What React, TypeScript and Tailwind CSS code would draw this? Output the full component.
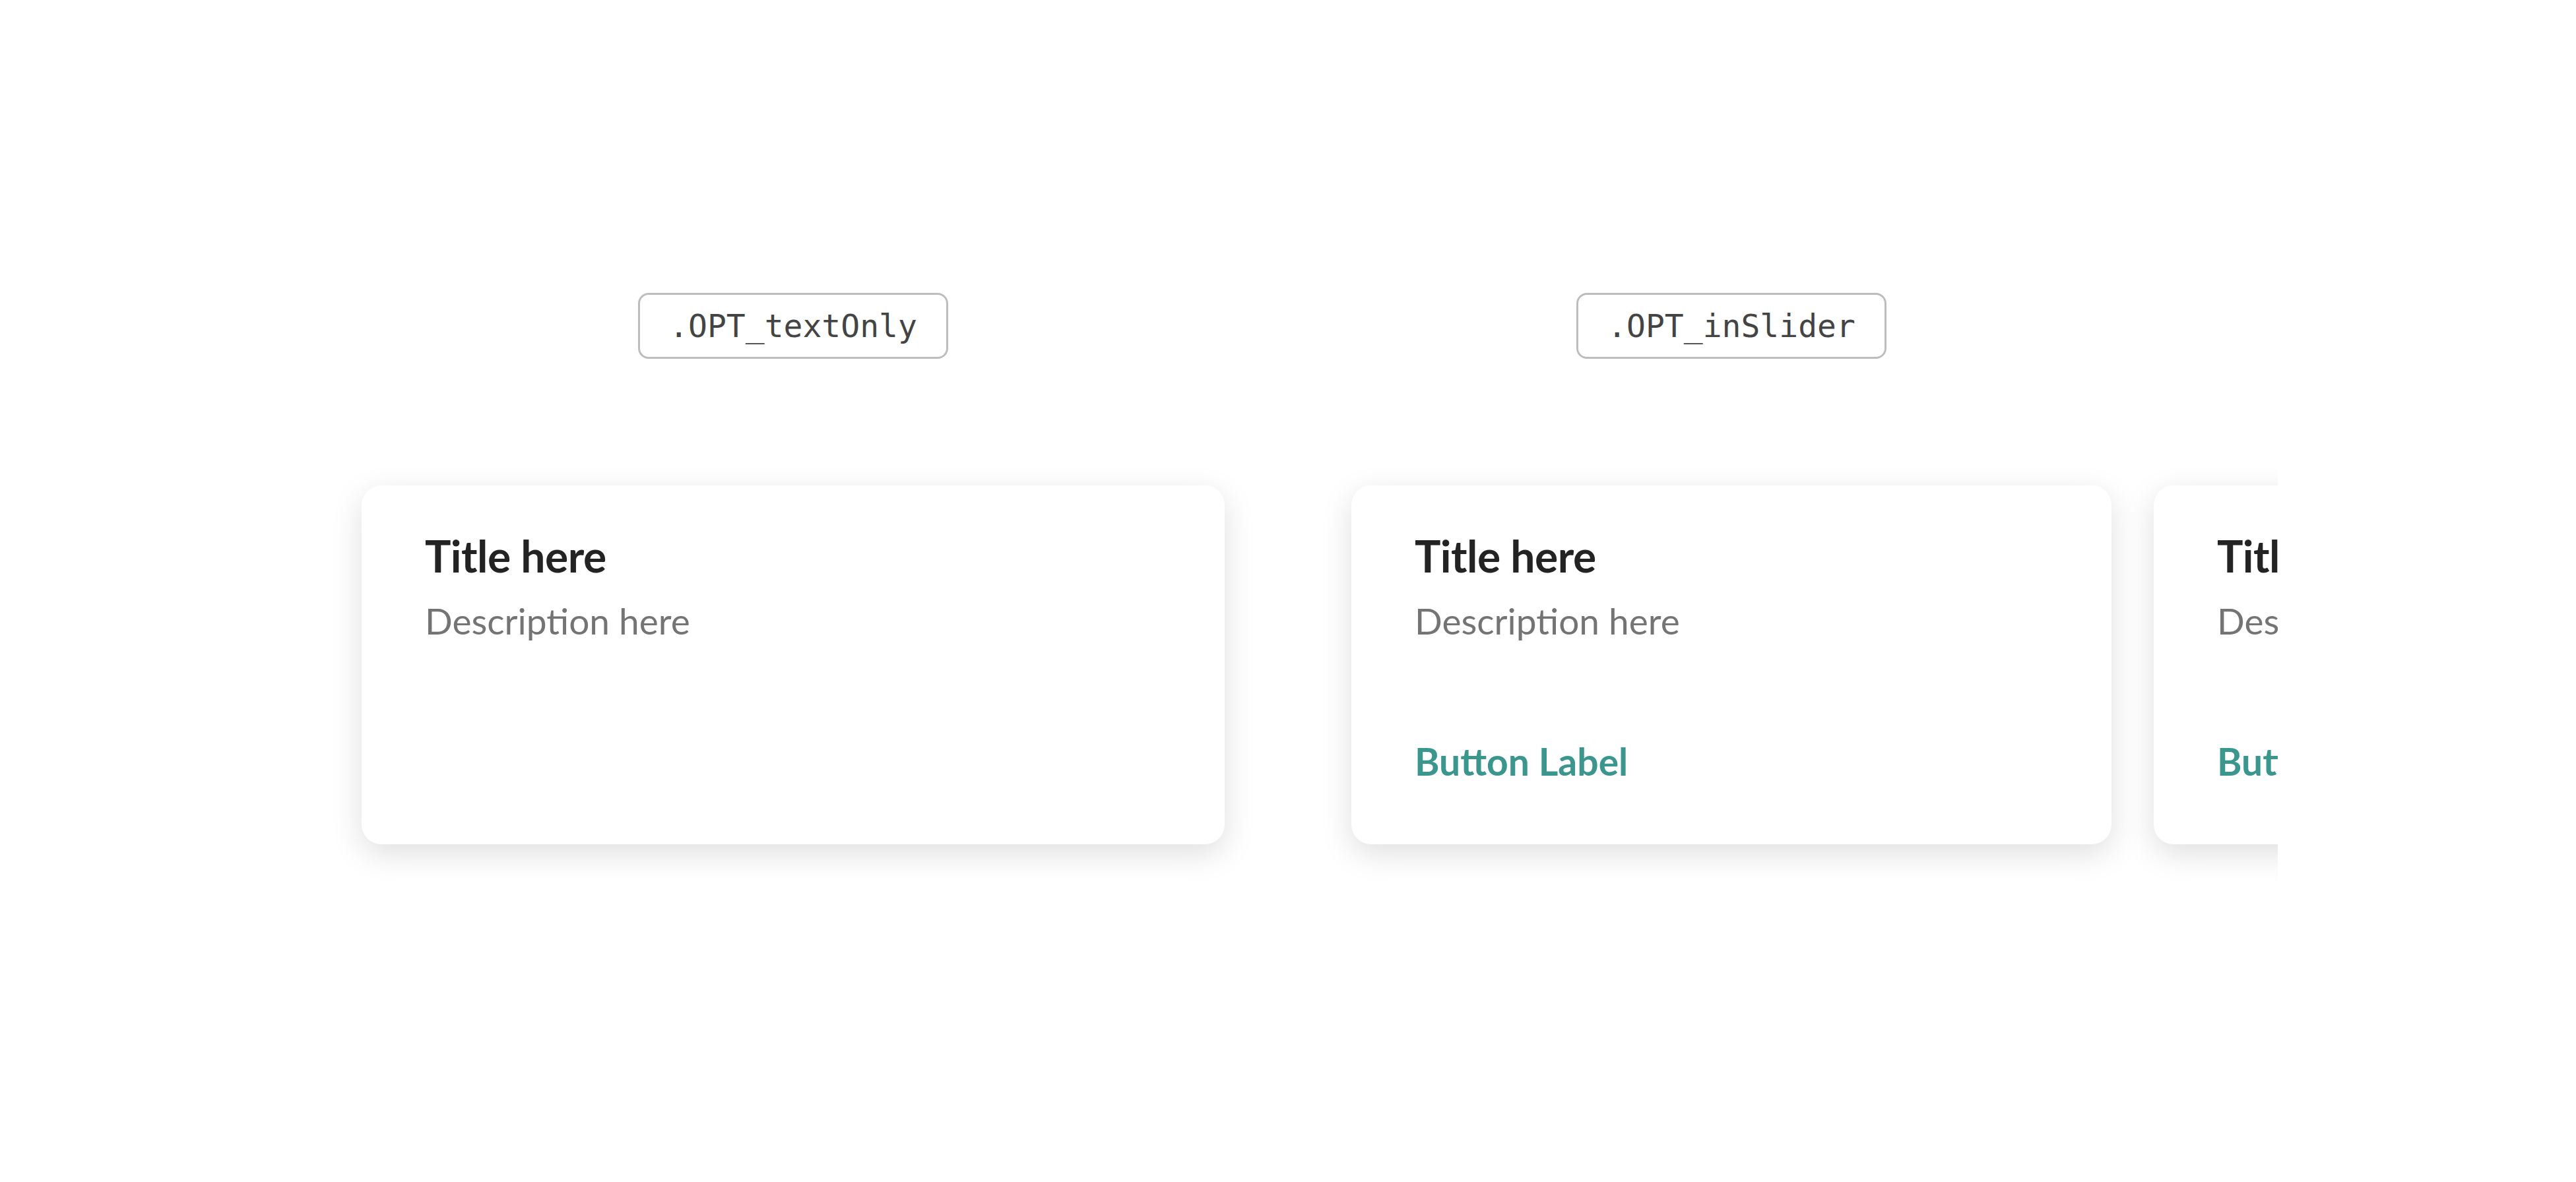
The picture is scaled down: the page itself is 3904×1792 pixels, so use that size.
// Option previews: a mono class-name tag above each card variant.
// .OPT_textOnly shows a lone card; .OPT_inSlider shows a card with a
// button label, followed by the next slide peeking in from the right.

type Variant = {
  tag: string;
  withButton: boolean;
};

const TEXT_ONLY: Variant = { tag: ".OPT_textOnly", withButton: false };
const IN_SLIDER: Variant = { tag: ".OPT_inSlider", withButton: true };

function Tag({ label }: { label: string }) {
  return (
    <div className="flex h-[100px] items-center rounded-[16px] border-[3px] border-[#bdbdbd] px-[44px] font-['DejaVu_Sans_Mono','Liberation_Mono',monospace] text-[48px] text-[#444444]">
      {label}
    </div>
  );
}

function Card({ variant, className = "" }: { variant: Variant; className?: string }) {
  return (
    <div
      className={`flex h-[544px] shrink-0 flex-col rounded-[30px] bg-white px-[96px] pt-[67px] pb-[92px] shadow-[0_14px_48px_rgba(0,0,0,0.13)] font-['Lato','Noto_Sans',sans-serif] ${className}`}
    >
      <h3 className="text-[66px] font-bold leading-[1.2] tracking-[-0.5px] text-[#232323]">
        Title here
      </h3>
      <p className="mt-[26px] text-[55px] leading-[1.2] text-[#747474]">
        Description here
      </p>
      {variant.withButton && (
        <button
          type="button"
          className="mt-auto self-start text-left text-[57px] font-bold leading-[1.2] text-[#3b978e]"
        >
          Button Label
        </button>
      )}
    </div>
  );
}

export default function App() {
  return (
    <div className="flex min-h-[1792px] w-full bg-white pl-[548px] pt-[444px]">
      {/* text only */}
      <div className="flex w-[1308px] shrink-0 flex-col items-center">
        <Tag label={TEXT_ONLY.tag} />
        <Card variant={TEXT_ONLY} className="mt-[192px] w-[1308px]" />
      </div>

      {/* in slider: clipped row, next card peeks in */}
      <div className="ml-[192px] flex shrink-0 flex-col">
        <div className="flex w-[1152px] justify-center">
          <Tag label={IN_SLIDER.tag} />
        </div>
        <div className="-ml-[64px] mt-[128px] w-[1468px] overflow-hidden p-[64px]">
          <div className="flex gap-[64px]">
            <Card variant={IN_SLIDER} className="w-[1152px]" />
            <Card variant={IN_SLIDER} className="w-[1152px]" />
          </div>
        </div>
      </div>
    </div>
  );
}
